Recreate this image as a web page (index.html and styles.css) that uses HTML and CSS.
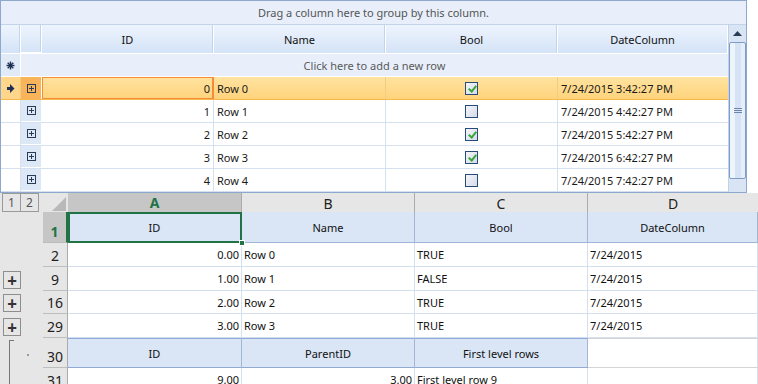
FILE: index.html
```html
<!DOCTYPE html>
<html>
<head>
<meta charset="utf-8">
<link rel="stylesheet" href="styles.css">
</head>
<body>
<div class="page">
  <div class="dg">
    <div class="group">Drag a column here to group by this column.</div>
    <div class="dg-main">
      <div class="dg-rows">
        <div class="row hdr">
          <div class="c ind"></div><div class="c exp"></div>
          <div class="c ctr">ID</div><div class="c ctr">Name</div><div class="c ctr">Bool</div><div class="c ctr last">DateColumn</div>
        </div>
        <div class="row newrow">
          <div class="c ind"><svg width="9" height="9" viewBox="0 0 9 9"><g stroke="#1c2f55" stroke-width="1.4"><line x1="4.5" y1="0.5" x2="4.5" y2="8.5"/><line x1="0.5" y1="4.5" x2="8.5" y2="4.5"/><line x1="1.7" y1="1.7" x2="7.3" y2="7.3"/><line x1="7.3" y1="1.7" x2="1.7" y2="7.3"/></g></svg></div>
          <div class="c newtext">Click here to add a new row</div>
        </div>
        <div class="row sel">
          <div class="c ind"><svg width="8" height="9" viewBox="0 0 8 9"><path d="M0 3 H3 V0 L7.5 4.5 L3 9 V6 H0 Z" fill="#1c2f55"/></svg></div>
          <div class="c exp"><span class="plus"></span></div>
          <div class="c num cur">0</div><div class="c">Row 0</div>
          <div class="c ctr"><span class="cb on"></span></div><div class="c last">7/24/2015 3:42:27 PM</div>
        </div>
        <div class="row">
          <div class="c ind"></div><div class="c exp"><span class="plus"></span></div>
          <div class="c num">1</div><div class="c">Row 1</div>
          <div class="c ctr"><span class="cb"></span></div><div class="c last">7/24/2015 4:42:27 PM</div>
        </div>
        <div class="row">
          <div class="c ind"></div><div class="c exp"><span class="plus"></span></div>
          <div class="c num">2</div><div class="c">Row 2</div>
          <div class="c ctr"><span class="cb on"></span></div><div class="c last">7/24/2015 5:42:27 PM</div>
        </div>
        <div class="row">
          <div class="c ind"></div><div class="c exp"><span class="plus"></span></div>
          <div class="c num">3</div><div class="c">Row 3</div>
          <div class="c ctr"><span class="cb on"></span></div><div class="c last">7/24/2015 6:42:27 PM</div>
        </div>
        <div class="row">
          <div class="c ind"></div><div class="c exp"><span class="plus"></span></div>
          <div class="c num">4</div><div class="c">Row 4</div>
          <div class="c ctr"><span class="cb"></span></div><div class="c last">7/24/2015 7:42:27 PM</div>
        </div>
      </div>
      <div class="vscroll">
        <div class="sb-up"><svg width="9" height="5" viewBox="0 0 9 5"><path d="M0 5 L4.5 0 L9 5 Z" fill="#2b3a55"/></svg></div>
        <div class="sb-thumb"><span class="grip"></span></div>
        <div class="sb-rest"></div>
      </div>
    </div>
  </div>

  <div class="ss">
    <div class="srow colhdr">
      <div class="ol"><span class="lvl">1</span><span class="lvl">2</span></div>
      <div class="corner"><svg width="14" height="14" viewBox="0 0 14 14"><path d="M14 0 V14 H0 Z" fill="#b9b9b9"/></svg></div>
      <div class="ch selch">A</div><div class="ch">B</div><div class="ch">C</div><div class="ch lastc">D</div>
    </div>
    <div class="srow r1">
      <div class="ol"></div>
      <div class="rh selrh">1</div>
      <div class="sc th active">ID<span class="handle"></span></div><div class="sc th">Name</div><div class="sc th">Bool</div><div class="sc th">DateColumn</div>
    </div>
    <div class="srow rd">
      <div class="ol"></div>
      <div class="rh">2</div>
      <div class="sc rt">0.00</div><div class="sc">Row 0</div><div class="sc">TRUE</div><div class="sc">7/24/2015</div>
    </div>
    <div class="srow rd">
      <div class="ol"><span class="obtn">+</span></div>
      <div class="rh">9</div>
      <div class="sc rt">1.00</div><div class="sc">Row 1</div><div class="sc">FALSE</div><div class="sc">7/24/2015</div>
    </div>
    <div class="srow rd h23">
      <div class="ol"><span class="obtn">+</span></div>
      <div class="rh">16</div>
      <div class="sc rt">2.00</div><div class="sc">Row 2</div><div class="sc">TRUE</div><div class="sc">7/24/2015</div>
    </div>
    <div class="srow rd">
      <div class="ol"><span class="obtn">+</span></div>
      <div class="rh">29</div>
      <div class="sc rt">3.00</div><div class="sc">Row 3</div><div class="sc">TRUE</div><div class="sc">7/24/2015</div>
    </div>
    <div class="srow r30">
      <div class="ol ol-grp top"><span class="dot"></span></div>
      <div class="rh">30</div>
      <div class="sc th">ID</div><div class="sc th">ParentID</div><div class="sc th">First level rows</div><div class="sc blank"></div>
    </div>
    <div class="srow r31">
      <div class="ol ol-grp"><span class="dot"></span></div>
      <div class="rh">31</div>
      <div class="sc rt">9.00</div><div class="sc rt">3.00</div><div class="sc">First level row 9</div><div class="sc"></div>
    </div>
  </div>
</div>
</body>
</html>
```

FILE: styles.css
```css
* { box-sizing: border-box; }
html, body { margin: 0; padding: 0; background: #fff; }
body { width: 758px; height: 384px; overflow: hidden; font-family: "Noto Sans", "Open Sans", sans-serif; font-size: 11px; color: #1a1a1a; }
.page { display: flex; flex-direction: column; }

/* ---- top data grid ---- */
.dg { width: 747px; height: 193px; border: 1px solid #8ea7cc; display: flex; flex-direction: column; }
.group { height: 24px; flex: none; border-bottom: 1px solid #c3d3ea; background: #e8effa; color: #555; display: flex; align-items: center; justify-content: center; }
.dg-main { flex: 1; display: flex; min-height: 0; }
.dg-rows { width: 727px; display: flex; flex-direction: column; }
.row { display: grid; grid-template-columns: 20px 21px 172px 172px 172px 170px; height: 23px; flex: none; border-bottom: 1px solid #d5e1f1; }
.row .c { display: flex; align-items: center; padding: 0 3px; border-right: 1px solid #d5e1f1; white-space: nowrap; overflow: hidden; }
.row .c.last { border-right: 0; }
.row .c.ctr { justify-content: center; }
.row .c.num { justify-content: flex-end; }
.row .c.ind { justify-content: center; padding: 0; background: #fff; }
.row .c.exp { justify-content: center; padding: 0; background: #dde8f6; border-right: 1px solid #fff; border-bottom: 1px solid #fff; }

.row.hdr { height: 29px; background: linear-gradient(#eef4fd, #d4e3f7); border-bottom: 1px solid #fff; }
.row.hdr .c { border-right: 1px solid #fff; box-shadow: inset -1px 0 0 #c3d4ec; color: #111; }
.row.hdr .c.ind, .row.hdr .c.exp { background: transparent; }
.row.hdr .c.last { box-shadow: none; }

.row.newrow { grid-template-columns: 20px 707px; background: #e8effa; border-bottom: 1px solid #fff; }
.row.newrow .c.ind { background: #e1ebf8; border-right: 1px solid #fff; }
.row.newrow .newtext { justify-content: center; color: #5a5a5a; border-right: 0; }

.row.sel { background: linear-gradient(#ffe3a0, #ffd37c); border-bottom: 1px solid #f7b850; }
.row.sel .c { border-right-color: #f4cc80; }
.row.sel .c.ind { background: #ffd68a; }
.row.sel .c.exp { background: #f9b459; border-right-color: #fff; border-bottom: 0; }
.row.sel .c.cur { border: 1px solid #f58c36; border-right-width: 2px; padding-right: 2px; }

.plus { width: 9px; height: 9px; border: 1px solid #2b3a55; position: relative; background: transparent; }
.plus::before { content: ""; position: absolute; left: 1px; right: 1px; top: 3px; height: 1px; background: #2b3a55; }
.plus::after { content: ""; position: absolute; top: 1px; bottom: 1px; left: 3px; width: 1px; background: #2b3a55; }

.cb { width: 13px; height: 13px; border: 1px solid #284b7a; background: linear-gradient(135deg, #f4f5f9, #d6dbe8); position: relative; }
.cb.on::after { content: ""; position: absolute; left: 4px; top: 1px; width: 3px; height: 6px; border: solid #3aa63a; border-width: 0 2px 2px 0; transform: rotate(40deg); }

.vscroll { width: 18px; display: flex; flex-direction: column; background: #d9e5f5; border-left: 1px solid #c0d2ea; }
.sb-up { height: 17px; display: flex; align-items: center; justify-content: center; flex: none; }
.sb-thumb { height: 137px; flex: none; border: 1px solid #7f9cc6; border-radius: 2px; background: linear-gradient(90deg, #eef4fc 0, #eef4fc 35%, #d6e3f4 35%, #d6e3f4 75%, #e6eefa 75%); display: flex; align-items: center; justify-content: center; }
.grip { width: 8px; height: 5px; border-top: 1px solid #6d86ad; border-bottom: 1px solid #6d86ad; position: relative; }
.grip::after { content: ""; position: absolute; left: 0; right: 0; top: 1px; height: 1px; background: #6d86ad; }
.sb-rest { flex: 1; }

/* ---- spreadsheet ---- */
.ss { width: 758px; height: 191px; overflow: hidden; background: #e6e6e6; display: flex; flex-direction: column; font-size: 11px; }
.srow { display: grid; grid-template-columns: 43px 25px 174px 173px 173px 170px; height: 24px; flex: none; }
.srow.colhdr { height: 19px; }
.srow.r1 { height: 31px; }
.srow.h23 { height: 23px; }
.srow.r30 { height: 30px; }
.srow.r31 { height: 24px; }

.ol { display: flex; align-items: flex-end; padding: 0 0 2px 3px; position: relative; }
.colhdr .ol { align-items: flex-start; padding: 0 0 0 2px; }
.lvl { width: 19px; height: 19px; border: 1px solid #9a9a9a; display: flex; align-items: center; justify-content: center; color: #555; font-size: 12px; margin-right: -1px; }
.obtn { width: 18px; height: 18px; border: 1px solid #8e8e8e; display: flex; align-items: center; justify-content: center; color: #333; font-size: 17px; font-weight: bold; line-height: 1; }
.ol-grp .dot { position: absolute; left: 27px; top: 16px; width: 2px; height: 2px; background: #9a9a9a; }
.ol-grp::before { content: ""; position: absolute; left: 9px; top: 0; bottom: 0; width: 1px; background: #777; }
.ol-grp.top::before { top: 2px; }
.ol-grp.top::after { content: ""; position: absolute; left: 9px; top: 2px; width: 5px; height: 1px; background: #777; }

.corner { display: flex; align-items: flex-end; justify-content: flex-end; padding: 0 2px 2px 0; border-bottom: 1px solid #ababab; }
.ch { display: flex; align-items: center; justify-content: center; font-size: 14px; color: #222; border-right: 1px solid #ababab; border-bottom: 1px solid #ababab; }
.ch.lastc { border-right: 0; }
.ch.selch { background: #c6c6c6; color: #217346; font-weight: bold; border-bottom: 2px solid #217346; }

.rh { display: flex; align-items: flex-end; justify-content: center; font-size: 14px; color: #222; padding-bottom: 1px; border-bottom: 1px solid #bdbdbd; border-right: 1px solid #ababab; }
.rh.selrh { background: #c6c6c6; color: #217346; font-weight: bold; border-right: 2px solid #217346; }

.sc { background: #fff; display: flex; align-items: center; padding: 0 2px; border-right: 1px solid #d4e0f0; border-bottom: 1px solid #d4e0f0; white-space: nowrap; overflow: hidden; color: #111; position: relative; }
.sc.rt { justify-content: flex-end; }
.sc.th { background: #dae6f6; justify-content: center; border-right: 1px solid #a3b6d2; border-bottom: 1px solid #90aad4; }
.r1 .sc { border-bottom: 1px solid #9fb6d9; }
.r30 .sc.th { border-top: 1px solid #8eaad8; }
.r30 .sc.blank { border-top: 1px solid #d4d4d4; border-bottom: 1px solid #d4d4d4; }
.sc.active { overflow: visible; }
.sc.active::before { content: ""; position: absolute; left: 0; top: 0; right: -1px; bottom: -1px; border: 2px solid #217346; }
.handle { position: absolute; right: -4px; bottom: -4px; width: 6px; height: 6px; background: #217346; border: 1px solid #fff; z-index: 2; }
```
